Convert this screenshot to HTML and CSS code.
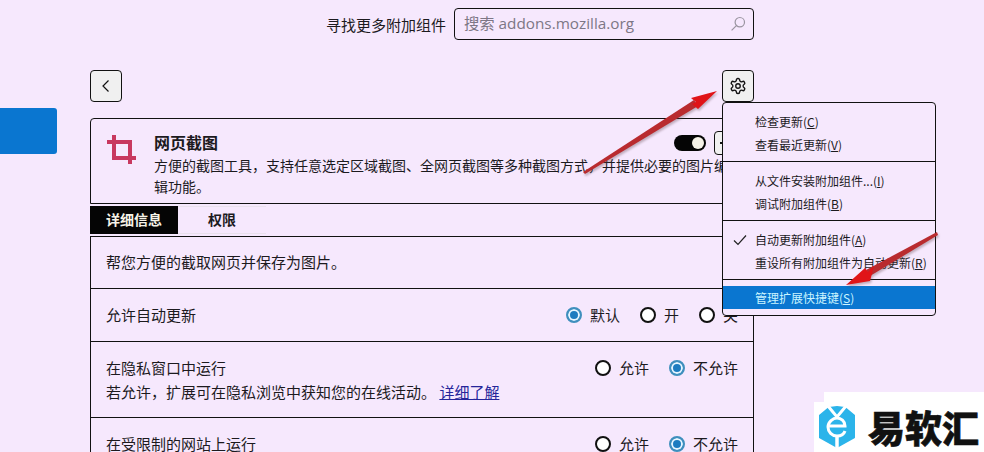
FILE: index.html
```html
<!DOCTYPE html>
<html lang="zh-CN">
<head>
  <meta charset="UTF-8" />
  <title>附加组件管理器</title>
  <link rel="stylesheet" href="styles.css">
</head>
<body>
  <div class="page">
    <div class="sidebar">
      <div class="side-active"></div>
    </div>

    <div class="main">
      <div class="search-row">
        <span>寻找更多附加组件</span>
        <div class="search-box">
          <input class="search-input" type="text" placeholder="搜索 addons.mozilla.org" />
          <svg class="search-icon" width="16" height="16" viewBox="0 0 16 16" fill="none" stroke="#9a94a0" stroke-width="1.2">
            <circle cx="9.8" cy="6.2" r="4.7" />
            <path d="M6.4 9.6 1.6 14.4" />
          </svg>
        </div>
      </div>

      <div class="nav-row">
        <button class="icon-btn">
          <svg width="16" height="16" viewBox="0 0 16 16" fill="none" stroke="#111" stroke-width="1.2">
            <path d="M10.5 2.5 5 8l5.5 5.5" />
          </svg>
        </button>
        <div class="gear-wrap">
          <button class="icon-btn">
            <svg width="18" height="18" viewBox="0 0 24 24" fill="none" stroke="#111" stroke-width="1.8" stroke-linejoin="round">
              <path d="M12.22 2h-.44a2 2 0 0 0-2 2v.18a2 2 0 0 1-1 1.73l-.43.25a2 2 0 0 1-2 0l-.15-.08a2 2 0 0 0-2.73.73l-.22.38a2 2 0 0 0 .73 2.73l.15.1a2 2 0 0 1 1 1.72v.51a2 2 0 0 1-1 1.74l-.15.09a2 2 0 0 0-.73 2.73l.22.38a2 2 0 0 0 2.73.73l.15-.08a2 2 0 0 1 2 0l.43.25a2 2 0 0 1 1 1.73V20a2 2 0 0 0 2 2h.44a2 2 0 0 0 2-2v-.18a2 2 0 0 1 1-1.73l.43-.25a2 2 0 0 1 2 0l.15.08a2 2 0 0 0 2.73-.73l.22-.39a2 2 0 0 0-.73-2.73l-.15-.08a2 2 0 0 1-1-1.74v-.5a2 2 0 0 1 1-1.74l.15-.09a2 2 0 0 0 .73-2.73l-.22-.38a2 2 0 0 0-2.73-.73l-.15.08a2 2 0 0 1-2 0l-.43-.25a2 2 0 0 1-1-1.73V4a2 2 0 0 0-2-2z" />
              <circle cx="12" cy="12" r="3" />
            </svg>
          </button>

          <div class="menu">
            <div class="menu-item">检查更新(<u>C</u>)</div>
            <div class="menu-item">查看最近更新(<u>V</u>)</div>
            <div class="menu-sep"></div>
            <div class="menu-item">从文件安装附加组件...(<u>I</u>)</div>
            <div class="menu-item">调试附加组件(<u>B</u>)</div>
            <div class="menu-sep"></div>
            <div class="menu-item">
              <svg class="menu-check" width="14" height="12" viewBox="0 0 14 12" fill="none" stroke="#222" stroke-width="1.2">
                <path d="M1 6.5 5 10.5 13 1.5" />
              </svg>
              自动更新附加组件(<u>A</u>)
            </div>
            <div class="menu-item">重设所有附加组件为自动更新(<u>R</u>)</div>
            <div class="menu-sep"></div>
            <div class="menu-item menu-item-active">管理扩展快捷键(<u>S</u>)</div>
          </div>
        </div>
      </div>

      <div class="card">
        <svg class="card-icon" width="29" height="29" viewBox="0 0 29 29" fill="none" stroke="#c8385f" stroke-width="4">
          <path d="M7 0V23H29" />
          <path d="M0 7H23V29" />
        </svg>
        <div class="card-body">
          <div class="card-head">
            <span class="card-title">网页截图</span>
            <div class="card-controls">
              <span class="toggle"></span>
              <button class="more-btn"><span class="more-dot"></span></button>
            </div>
          </div>
          <p class="card-desc">方便的截图工具，支持任意选定区域截图、全网页截图等多种截图方式，并提供必要的图片编辑功能。</p>
        </div>
      </div>

      <div class="tabs">
        <div class="tab tab-active">详细信息</div>
        <div class="tab">权限</div>
      </div>

      <div class="details">
        <div class="row row-first">帮您方便的截取网页并保存为图片。</div>
        <div class="row">
          <span>允许自动更新</span>
          <div class="options">
            <label class="option"><span class="radio radio-on"></span>默认</label>
            <label class="option"><span class="radio"></span>开</label>
            <label class="option"><span class="radio"></span>关</label>
          </div>
        </div>
        <div class="row">
          <div>
            <div>在隐私窗口中运行</div>
            <div class="row-note">若允许，扩展可在隐私浏览中获知您的在线活动。 <a class="link" href="#">详细了解</a></div>
          </div>
          <div class="options">
            <label class="option"><span class="radio"></span>允许</label>
            <label class="option"><span class="radio radio-on"></span>不允许</label>
          </div>
        </div>
        <div class="row">
          <span>在受限制的网站上运行</span>
          <div class="options">
            <label class="option"><span class="radio"></span>允许</label>
            <label class="option"><span class="radio radio-on"></span>不允许</label>
          </div>
        </div>
      </div>
    </div>
  </div>

  <!-- annotation arrows -->
  <svg class="arrows" width="984" height="452" viewBox="0 0 984 452">
    <path class="arrow-shaft" d="M583 172 694 100 698 106 585 174z" />
    <path class="arrow-head" d="M717 91 691 98 696 102 692 104 698 109z" />
    <path class="arrow-shaft" d="M937 232 866 270 870 276 938 235z" />
    <path class="arrow-head" d="M846 285 865 268 868 272 874 266 870 281z" />
  </svg>

  <div class="watermark">
    <svg width="38" height="42" viewBox="0 0 38 42">
      <path d="M11 2 19 1 27 2 36 9.500V31.500L19 41 2 31.500V9.500z" fill="#2bb4ea" stroke="#2bb4ea" stroke-width="2" stroke-linejoin="round" />
      <path d="M10 0 19 11 28 0" fill="none" stroke="#fff" stroke-width="3" />
      <path d="M11 20H27C27 15 23 12 19 12S10 16 10 21 14 30 19 30 26 28 27 25" fill="none" stroke="#fff" stroke-width="3" />
      <path d="M19 30V42" stroke="#fff" stroke-width="3.5" />
    </svg>
    <span class="watermark-text">易软汇</span>
  </div>
</body>
</html>
```

FILE: styles.css
```css
* {
  box-sizing: border-box;
}

html, body {
  height: 452px;
  margin: 0;
  overflow: hidden;
}

body {
  position: relative;
  background-color: #f6e8fd;
  color: #1c1a1e;
  font-family: "Noto Sans CJK SC", "Noto Sans", sans-serif;
  font-size: 15px;
}

.page {
  display: flex;
}

.sidebar {
  width: 90px;
  flex: none;
}

.side-active {
  width: 57px;
  height: 46px;
  margin-top: 108px;
  background-color: #0a76d0;
  border-radius: 0 3px 3px 0;
}

.main {
  width: 664px;
  padding-top: 8px;
}

.search-row {
  display: flex;
  justify-content: flex-end;
  align-items: center;
  gap: 8px;
  height: 32px;
}

.search-box {
  display: flex;
  align-items: center;
  width: 300px;
  height: 32px;
  padding: 0 7px 0 9px;
  border: 1px solid #111;
  border-radius: 4px;
}

.search-input {
  flex: 1;
  min-width: 0;
  border: none;
  outline: none;
  padding: 0 0 2px;
  background: transparent;
  font-family: "Open Sans", "Noto Sans CJK SC", sans-serif;
  font-size: 15.3px;
}

.search-input::placeholder {
  color: #7d7785;
  opacity: 1;
}

.nav-row {
  display: flex;
  justify-content: space-between;
  margin-top: 30px;
}

.gear-wrap {
  position: relative;
}

.icon-btn {
  display: flex;
  justify-content: center;
  align-items: center;
  width: 32px;
  height: 32px;
  padding: 0;
  background-color: #f0f0f0;
  border: 1px solid #111;
  border-radius: 4px;
}

.menu {
  position: absolute;
  top: 100%;
  left: 0;
  z-index: 10;
  width: 214px;
  padding: 7px 0 6px;
  background-color: #f6e8fd;
  border: 1px solid #111;
  border-radius: 4px;
  font-size: 12px;
}

.menu-item {
  position: relative;
  height: 23px;
  line-height: 23px;
  padding-left: 32px;
  white-space: nowrap;
}

.menu-item-active {
  margin-top: -1px;
  background-color: #0a76d0;
  color: #c9f4ff;
}

.menu-check {
  position: absolute;
  left: 10px;
  top: 6px;
}

.menu-sep {
  height: 1px;
  margin: 5px 0 7px;
  background-color: #111;
}

.card {
  display: flex;
  gap: 18px;
  height: 86px;
  margin-top: 16px;
  padding: 12px 7px 6px 16px;
  border: 1px solid #111;
  border-radius: 4px 4px 0 0;
}

.card-icon {
  flex: none;
  margin-top: 4px;
}

.card-body {
  flex: 1;
  min-width: 0;
}

.card-head {
  display: flex;
  justify-content: space-between;
  align-items: center;
  height: 24px;
}

.card-title {
  padding-bottom: 2px;
  font-size: 16px;
  font-weight: 700;
}

.card-controls {
  display: flex;
  align-items: center;
  gap: 8px;
}

.toggle {
  position: relative;
  width: 32px;
  height: 16px;
  background-color: #050505;
  border-radius: 8px;
}

.toggle::after {
  content: "";
  position: absolute;
  top: 2px;
  right: 2px;
  width: 12px;
  height: 12px;
  background-color: #f6f3e8;
  border-radius: 50%;
}

.more-btn {
  display: flex;
  align-items: center;
  width: 32px;
  height: 24px;
  padding: 0 0 0 5px;
  background-color: #f0f0f0;
  border: 1px solid #111;
  border-radius: 4px;
}

.more-dot {
  width: 2px;
  height: 2px;
  background-color: #111;
}

.card-desc {
  max-width: 584px;
  margin: 0;
  font-size: 14px;
  line-height: 21px;
}

.tabs {
  display: flex;
  width: 176px;
  height: 28px;
  margin-top: 2px;
  border-top: 1px solid #e9e1ec;
  border-bottom: 1px solid #e9e1ec;
  font-size: 14px;
  font-weight: 700;
}

.tab {
  height: 28px;
  margin-top: -1px;
  padding: 0 16px;
  line-height: 26px;
}

.tab-active {
  background-color: #050505;
  color: #f6f3e8;
  margin-right: 14px;
}

.details {
  margin-top: 2px;
  border: 1px solid #111;
  border-bottom: none;
}

.row {
  display: flex;
  justify-content: space-between;
  padding: 14px 15px;
  line-height: 24px;
  border-bottom: 1px solid #111;
}

.row-first {
  padding-top: 13px;
}

.row-note {
  line-height: 23px;
}

.link {
  color: #25259a;
}

.options {
  display: flex;
  gap: 20px;
}

.option {
  display: flex;
  align-items: center;
  gap: 8px;
  height: 24px;
}

.radio {
  width: 16px;
  height: 16px;
  background-color: #fff;
  border: 2px solid #111;
  border-radius: 50%;
}

.radio-on {
  background-color: #1c7cc0;
  border-color: #3f8fbd;
  box-shadow: inset 0 0 0 2px #e6f6ff;
}

.arrows {
  position: absolute;
  top: 0;
  left: 0;
  z-index: 20;
  pointer-events: none;
  filter: drop-shadow(1px 2px 1px rgba(90, 60, 70, 0.35));
}

.arrow-shaft {
  fill: #b92b2f;
}

.arrow-head {
  fill: #e01418;
}

.watermark {
  position: absolute;
  right: 0;
  bottom: 0;
  z-index: 30;
  display: flex;
  align-items: center;
  width: 170px;
  height: 50px;
  padding-left: 4px;
  background-color: #fff;
}

.watermark::before {
  content: "";
  position: absolute;
  top: -10px;
  right: 0;
  width: 160px;
  height: 10px;
  background-color: #fff;
}

.watermark-text {
  margin-left: 12px;
  color: #111;
  font-size: 37px;
  font-weight: 900;
  line-height: 1;
  white-space: nowrap;
  -webkit-text-stroke: 0.6px #111;
}
```
